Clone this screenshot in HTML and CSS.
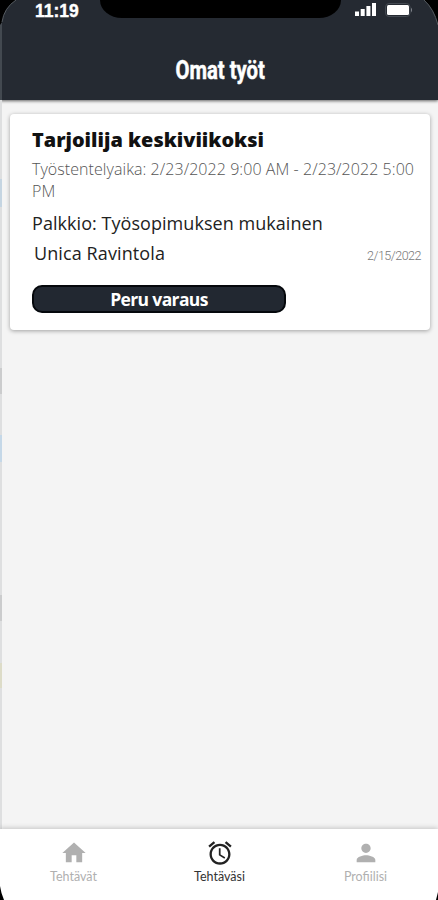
FILE: index.html
```
<!DOCTYPE html>
<html lang="fi">
<head>
<meta charset="UTF-8">
<meta name="viewport" content="width=device-width, initial-scale=1.0">
<title>Omat työt</title>
<link rel="stylesheet" href="styles.css">
</head>
<body>
<div class="phone">
    <header class="header">
        <div class="status-bar">
            <span class="time">11:19</span>
            <span class="notch"></span>
            <svg class="signal" width="21" height="13" viewBox="0 0 21 13">
                <path d="M0 8.500h4V13H0zM5.700 6h4v7h-4zM11.400 3h4v10h-4zM17 0h4v13h-4z" fill="#fff"/>
            </svg>
            <svg class="battery" width="28" height="14" viewBox="0 0 28 14">
                <rect x=".5" y=".5" width="24.500" height="13" rx="3.500" fill="none" stroke="#444a52"/>
                <rect x="2" y="2" width="22" height="10" rx="1.500" fill="#fff"/>
                <path d="M26 4.500q2 2.500 0 5z" fill="#858990"/>
            </svg>
        </div>
        <h1 class="title"><span>Omat työt</span></h1>
    </header>
    <main class="content">
        <div class="card">
            <h2 class="job-title">Tarjoilija keskiviikoksi</h2>
            <p class="job-time">Työstentelyaika: 2/23/2022 9:00 AM - 2/23/2022 5:00 PM</p>
            <p class="job-pay">Palkkio: Työsopimuksen mukainen</p>
            <div class="job-row">
                <span class="company">Unica Ravintola</span>
                <span class="date">2/15/2022</span>
            </div>
            <button class="cancel">Peru varaus</button>
        </div>
    </main>
    <nav class="tabs">
        <div class="tab">
            <svg width="28" height="28" viewBox="0 0 24 24"><path d="M10 20v-6h4v6h5v-8h3L12 3 2 12h3v8z" fill="#b0b0b0"/></svg>
            <span>Tehtävät</span>
        </div>
        <div class="tab active">
            <svg width="28" height="28" viewBox="0 0 24 24"><path d="M22 5.720l-4.600-3.860-1.290 1.530 4.600 3.860L22 5.720zM7.880 3.390L6.600 1.860 2 5.710l1.290 1.530 4.590-3.850zM12.500 8H11v6l4.750 2.850.75-1.230-4-2.370V8zM12 4c-4.970 0-9 4.030-9 9s4.020 9 9 9c4.970 0 9-4.030 9-9s-4.030-9-9-9zm0 16c-3.870 0-7-3.130-7-7s3.130-7 7-7 7 3.130 7 7-3.130 7-7 7z" fill="#222"/></svg>
            <span>Tehtäväsi</span>
        </div>
        <div class="tab">
            <svg width="28" height="28" viewBox="0 0 24 24"><path d="M12 12c2.210 0 4-1.790 4-4s-1.790-4-4-4-4 1.790-4 4 1.790 4 4 4zm0 2c-2.670 0-8 1.340-8 4v2h16v-2c0-2.660-5.330-4-8-4z" fill="#b0b0b0"/></svg>
            <span>Profiilisi</span>
        </div>
    </nav>
    <!-- Rounded corners of the phone -->
    <svg class="corners" width="438" height="900" viewBox="0 0 438 900">
        <path d="M0 0h16Q4 8 2 22L0 25z"/>
        <path d="M424 0h14v25Q434 9 424 0z"/>
        <path d="M0 886q1 7 4 14H0zM438 892q-1 4-2 8h2z"/>
        <path d="M16 0Q4 8 2 22M424 0q10 9 14 25" fill="none" stroke="#555b61"/>
    </svg>
</div>
</body>
</html>
```
FILE: styles.css
```
/* CSS for body*/
body {
    margin: 0;
    background-color: #f4f4f4;
    font-family: "Open Sans", "Noto Sans", sans-serif;
    color: #222;
}
h1, h2, p {
    margin: 0;
    font-weight: normal;
}
.phone {
    position: relative;
    width: 438px;
    height: 900px;
    overflow: hidden;
    display: flex;
    flex-direction: column;
    background-color: #f4f4f4;
}
/* Header */
.header {
    box-sizing: border-box;
    height: 100px;
    background-color: #252a32;
    box-shadow: 0 1px 3px rgba(0, 0, 0, 0.6);
    border-left: 2px solid #434950;
}
.status-bar {
    display: flex;
    align-items: flex-start;
    height: 40px;
}
.time {
    width: 65px;
    padding-left: 33px;
    font-family: "Liberation Sans", Arial, sans-serif;
    font-size: 17.5px;
    font-weight: bold;
    line-height: 22px;
    color: #fff;
    -webkit-text-stroke: 0.4px #fff;
}
.notch {
    width: 241px;
    height: 18px;
    border-radius: 0 0 22px 22px / 0 0 18px 18px;
    background-color: #000;
}
.signal {
    margin: 3px 0 0 14px;
}
.battery {
    margin: 3px 0 0 9px;
}
.title {
    text-align: center;
    font-family: Roboto, sans-serif;
    font-size: 25px;
    font-weight: bold;
    line-height: 61px;
    color: #fff;
    -webkit-text-stroke: 0.5px #fff;
}
.title span {
    display: inline-block;
    transform: scaleX(0.81);
}
/* Job card */
.content {
    flex: 1;
    padding: 14px 9px 0 10px;
    /* Slightly coloured strip on the left edge */
    background: linear-gradient(#dedfe0 0 79px, #c5d5e2 79px 107px, #dedfe0 107px 268px, #cbcccd 268px 294px, #dedfe0 294px 335px, #c5d8e8 335px 362px, #dedfe0 362px 495px, #cbcccd 495px 521px, #dedfe0 521px 563px, #dddcc8 563px 588px, #dedfe0 588px) left top / 2px 100% no-repeat;
}
.card {
    box-sizing: border-box;
    width: 420px;
    height: 216px;
    padding: 14px 9px 0 22px;
    border-radius: 4px;
    background-color: #fff;
    box-shadow: 0 1px 4px rgba(0, 0, 0, 0.35);
}
.job-title {
    font-size: 19.9px;
    font-weight: 800;
    line-height: 24px;
    color: #111;
}
.job-time {
    width: 387px;
    margin-top: 6px;
    font-size: 16px;
    font-weight: 350;
    line-height: 22px;
    letter-spacing: 0.06px;
    color: #555;
}
.job-pay {
    margin-top: 8px;
    font-size: 18px;
    line-height: 26px;
    letter-spacing: 0.05px;
    white-space: nowrap;
}
.job-row {
    display: flex;
    justify-content: space-between;
    align-items: center;
    height: 26px;
    padding-left: 2px;
    margin-top: 4px;
    font-size: 18px;
    line-height: 26px;
    letter-spacing: 0.1px;
}
.date {
    font-family: Roboto, sans-serif;
    font-size: 12.5px;
    font-weight: 300;
    letter-spacing: -0.5px;
    padding-top: 6px;
    color: #777;
}
.cancel {
    display: block;
    box-sizing: border-box;
    width: 254px;
    height: 28px;
    margin-top: 19px;
    padding: 0;
    border: 2px solid #05080c;
    border-radius: 10px;
    background-color: #222831;
    font-family: "Open Sans", sans-serif;
    font-size: 17.5px;
    font-weight: 700;
    line-height: 22px;
    letter-spacing: -0.65px;
    color: #fff;
}
/* Bottom tabs */
.tabs {
    display: flex;
    height: 71px;
    background-color: #fff;
    box-shadow: 0 -1px 5px rgba(0, 0, 0, 0.2);
}
.tab {
    flex: 1;
    display: flex;
    flex-direction: column;
    align-items: center;
    padding: 10px 0 0 1px;
    font-family: Lato, sans-serif;
    font-size: 12.5px;
    line-height: 19px;
    color: #b0b0b0;
}
.active {
    color: #333;
}
.corners {
    position: absolute;
    top: 0;
    left: 0;
}
```
